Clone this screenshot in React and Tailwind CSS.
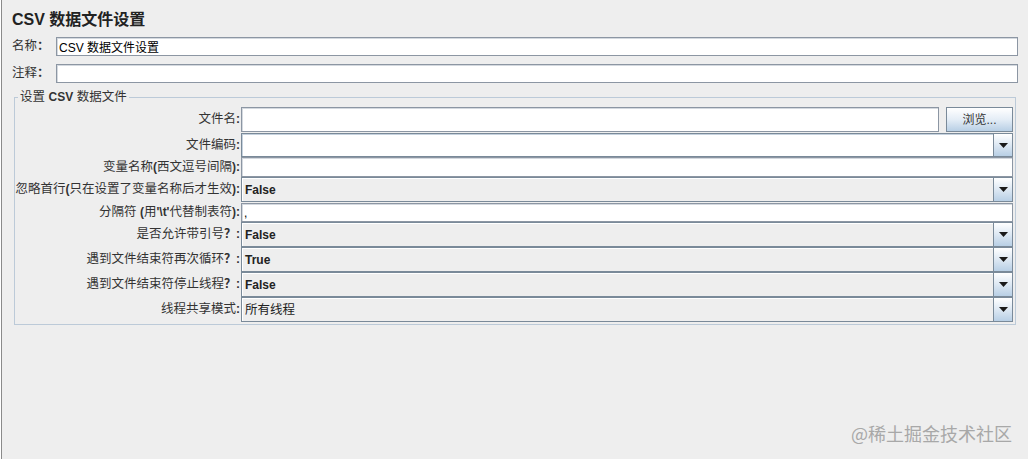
import React from "react";

const FONT = "font-['Liberation_Sans','Noto_Sans_CJK_SC',sans-serif]";

// Java Dialog bold: latin glyphs bold, CJK fallback stays regular
function Label({ text }) {
  const parts = text.split(/([\x20-\x7E？]+)/).filter(Boolean);
  return (
    <span className="whitespace-nowrap">
      {parts.map((p, i) =>
        /^[\x20-\x7E？]+$/.test(p) ? (
          <span key={i} className="font-bold text-[12px]">
            {p}
          </span>
        ) : (
          <span key={i}>{p}</span>
        )
      )}
    </span>
  );
}

function TextBox({ value = "", className = "" }) {
  return (
    <input
      readOnly
      value={value}
      className={`h-full w-full border border-[#8c96a3] bg-white px-[2px] text-[12px] text-black outline-none shadow-[inset_1px_1px_0_#d4d9df] ${className}`}
    />
  );
}

function Arrow() {
  return (
    <svg width="9" height="5" viewBox="0 0 9 5">
      <path d="M0 0 H9 L4.5 5 Z" fill="#1a1a1a" />
    </svg>
  );
}

function Combo({ value = "", editable = false }) {
  return (
    <div className="flex h-full w-full border border-[#7a8a99]">
      <div
        className={`flex flex-1 items-center pl-[2px] text-[12.5px] text-[#222] border-t border-l ${
          editable ? "bg-white border-[#c6d2de]" : "bg-[#eeeeee] border-white"
        }`}
      >
        <Label text={value} />
      </div>
      <div className="flex w-[19px] items-center justify-center border-l border-[#7a8a99] bg-gradient-to-b from-white via-[#dde8f3] to-[#b8cfe5]">
        <Arrow />
      </div>
    </div>
  );
}

const rows = [
  { label: "文件名:", kind: "file", h: "h-[26px]", c: "h-[25px]" },
  { label: "文件编码:", kind: "combo", editable: true, h: "h-[24px]", c: "h-[24px]" },
  { label: "变量名称(西文逗号间隔):", kind: "text", h: "h-[20px]", c: "h-[20px]" },
  { label: "忽略首行(只在设置了变量名称后才生效):", kind: "combo", value: "False", h: "h-[26px]", c: "h-[25px]" },
  { label: "分隔符 (用'\\t'代替制表符):", kind: "text", value: ",", h: "h-[19px]", c: "h-[19px]" },
  { label: "是否允许带引号？:", kind: "combo", value: "False", h: "h-[25px]", c: "h-[25px]" },
  { label: "遇到文件结束符再次循环？:", kind: "combo", value: "True", h: "h-[25px]", c: "h-[25px]" },
  { label: "遇到文件结束符停止线程？:", kind: "combo", value: "False", h: "h-[25px]", c: "h-[25px]" },
  { label: "线程共享模式:", kind: "combo", value: "所有线程", h: "h-[25px]", c: "h-[25px]" },
];

export default function App() {
  return (
    <div className={`relative ml-px h-screen overflow-hidden border-l border-[#8a8a8a] bg-[#eeeeee] text-[#333] ${FONT}`}>
      <div className="pl-[10px] pr-[10px] pt-[9px]">
        <h1 className="h-[22px] text-[16px] font-bold leading-[22px] text-[#222]">CSV 数据文件设置</h1>

        <div className="mt-[6px] flex h-[19px] items-center">
          <span className="w-[44px] shrink-0 text-[12.5px] text-[#333]">
            名称<span className="font-bold">：</span>
          </span>
          <TextBox value="CSV 数据文件设置" className="border-[#7f7f7f] text-[12.5px]" />
        </div>
        <div className="mt-[8px] flex h-[19px] items-center">
          <span className="w-[44px] shrink-0 text-[12.5px] text-[#333]">
            注释<span className="font-bold">：</span>
          </span>
          <TextBox className="border-[#7f7f7f]" />
        </div>

        <fieldset className="mx-[2px] mt-[6px] border border-[#bccad8] px-[2px] pb-[2px] pt-[2px]">
          <legend className="ml-px px-[2px] text-[12.5px] leading-[16px] text-[#333]">
            设置 <span className="font-bold text-[12px]">CSV</span> 数据文件
          </legend>
          {rows.map((r) => (
            <div key={r.label} className={`flex items-start ${r.h}`}>
              <div className={`flex w-[224px] shrink-0 items-center justify-end pr-px text-[12.5px] text-[#333] ${r.c}`}>
                <Label text={r.label} />
              </div>
              <div className={`flex flex-1 ${r.c}`}>
                {r.kind === "file" && (
                  <div className="flex h-full w-full gap-[7px]">
                    <TextBox />
                    <button className="h-full w-[67px] shrink-0 border border-[#7a8a99] bg-gradient-to-b from-white via-[#e4edf6] to-[#b8cfe5] text-[12px] text-[#333]">
                      浏览...
                    </button>
                  </div>
                )}
                {r.kind === "combo" && <Combo value={r.value} editable={r.editable} />}
                {r.kind === "text" && <TextBox value={r.value} />}
              </div>
            </div>
          ))}
        </fieldset>
      </div>

      <div className="absolute bottom-[14px] right-[16px] text-[18px] leading-[24px] text-[#a8a8a8] font-['Noto_Sans_CJK_SC',sans-serif]">
        @稀土掘金技术社区
      </div>
    </div>
  );
}
